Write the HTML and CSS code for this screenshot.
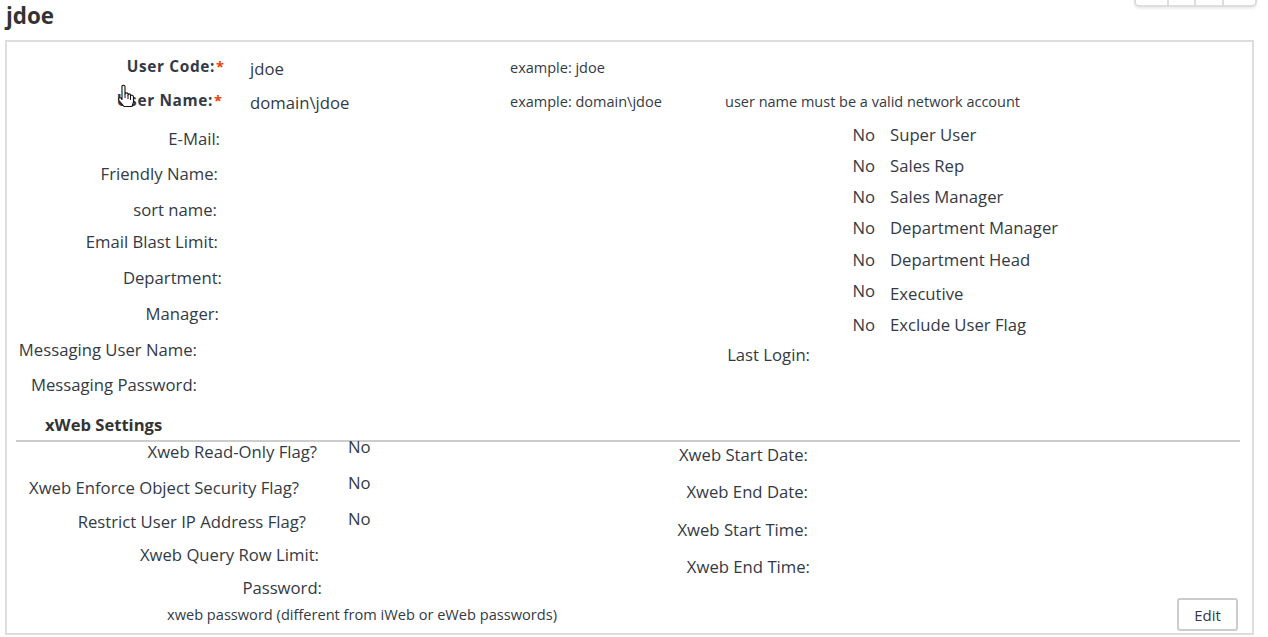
FILE: index.html
```html
<!DOCTYPE html>
<html lang="en">
<head>
<meta charset="utf-8">
<title>jdoe</title>
<link rel="stylesheet" href="styles.css">
</head>
<body>
<div class="toolbar"><span class="tool t1"></span><span class="tool t2"></span><span class="tool t3"></span><span class="tool t4"></span></div>
<h1 class="title">jdoe</h1>
<section class="panel">
  <div class="identity">
    <div class="id-row code">
      <span class="id-label"><b>User Code:</b><i>*</i></span>
      <span class="id-value">jdoe</span>
      <span class="hint">example: jdoe</span>
    </div>
    <div class="id-row name">
      <span class="id-label"><b>User Name:</b><i>*</i></span>
      <span class="id-value">domain\jdoe</span>
      <span class="hint">example: domain\jdoe</span>
      <span class="hint note">user name must be a valid network account</span>
    </div>
  </div>
  <div class="columns">
    <div class="fields">
      <div class="field h35 w204">E-Mail:</div>
      <div class="field h36 w202">Friendly Name:</div>
      <div class="field h32 w201">sort name:</div>
      <div class="field h36 w202b">Email Blast Limit:</div>
      <div class="field h36 w206">Department:</div>
      <div class="field h36 w203">Manager:</div>
      <div class="field h35 w181">Messaging User Name:</div>
      <div class="field h28 w181">Messaging Password:</div>
    </div>
    <div class="flags">
      <div class="flag h31"><span class="flag-no">No</span><span>Super User</span></div>
      <div class="flag h31"><span class="flag-no">No</span><span>Sales Rep</span></div>
      <div class="flag h31"><span class="flag-no">No</span><span>Sales Manager</span></div>
      <div class="flag h32"><span class="flag-no">No</span><span>Department Manager</span></div>
      <div class="flag h31"><span class="flag-no">No</span><span>Department Head</span></div>
      <div class="flag h34 exec"><span class="flag-no">No</span><span>Executive</span></div>
      <div class="flag h30"><span class="flag-no">No</span><span>Exclude User Flag</span></div>
      <div class="field last-login">Last Login:</div>
    </div>
  </div>
  <h2 class="section-title">xWeb Settings</h2>
  <div class="xweb">
    <div class="xweb-left">
      <div class="xrow h36"><span class="field w302">Xweb Read-Only Flag?</span><span class="xno no1">No</span></div>
      <div class="xrow h34"><span class="field w283">Xweb Enforce Object Security Flag?</span><span class="xno no2">No</span></div>
      <div class="xrow h33"><span class="field w290">Restrict User IP Address Flag?</span><span class="xno no3">No</span></div>
      <div class="xrow h33"><span class="field w303">Xweb Query Row Limit:</span></div>
      <div class="xrow h26"><span class="field w306">Password:</span></div>
      <div class="small-note">xweb password (different from iWeb or eWeb passwords)</div>
    </div>
    <div class="xweb-right">
      <div class="field h37 w792">Xweb Start Date:</div>
      <div class="field h38 w792">Xweb End Date:</div>
      <div class="field h37 w792">Xweb Start Time:</div>
      <div class="field h33 w794">Xweb End Time:</div>
      <button class="edit" type="button">Edit</button>
    </div>
  </div>
</section>
<svg class="cursor" width="19" height="25" viewBox="0 0 19 25"><path d="M5 2.500C5 .8 8 .8 8 2.500V10C8 8.500 11 8.500 11 10V11C11 9.500 13.500 9.500 13.500 11V12C13.500 10.500 16.500 11 16.500 13V18L15 22.500H7L2 16.500C1 15 2 13 4 14L5 15.500Z" fill="#fff" stroke="#111" stroke-width="1.100" stroke-linejoin="round"/><path d="M8 10v4M11 11v4M13.500 12v4" stroke="#111" stroke-width="1"/></svg>
</body>
</html>
```
FILE: styles.css
```css
* { box-sizing: border-box; }
html, body { margin: 0; height: 637px; overflow: hidden; }
body {
  position: relative;
  background: #fff;
  color: #333a45;
  font: 16.7px/22px "Open Sans", sans-serif;
}
.toolbar {
  position: absolute;
  top: -2px;
  left: 1134px;
  width: 123px;
  height: 9px;
  display: flex;
  border: 2px solid #ddd;
  border-radius: 0 0 5px 5px;
  box-shadow: 0 2px 2px #eee;
}
.tool { height: 100%; border-right: 2px solid #ddd; }
.t1 { width: 33px; }
.t2 { width: 27px; }
.t3 { width: 28px; }
.t4 { flex: 1; border-right: 0; }
.title {
  margin: 0;
  padding: 4px 0 0 6px;
  height: 40px;
  font-size: 22.4px;
  line-height: 24px;
  font-weight: 700;
  color: #333;
}
.panel {
  margin-left: 5px;
  padding: 1px 0 0 1px;
  width: 1249px;
  height: 595px;
  border: 2px solid #ddd;
}
.identity { padding-top: 14px; }
.id-row { display: flex; height: 34px; }
.id-label { width: 216px; text-align: right; font-size: 15.4px; letter-spacing: .65px; position: relative; top: -1px; }
.id-label b { font-weight: 700; }
.id-label i { color: #f03a0a; font-size: 14.5px; font-style: normal; font-weight: 700; margin-left: 1px; letter-spacing: 0; }
.name .id-label { width: 214px; margin-right: 2px; }
.id-value { margin-left: 26px; width: 260px; position: relative; top: 1px; }
.hint { font-size: 14.5px; width: 215px; }
.note { width: auto; }
.columns { display: flex; height: 289px; margin-top: -3px; }
.fields { width: 240px; padding-top: 6px; }
.flags { padding-top: 2px; flex: 1; }
.field { display: block; text-align: right; }
.flag { display: flex; padding-left: 595px; }
.flag-no { width: 32px; margin-right: 15px; text-align: right; }
.exec .flag-no { position: relative; top: -3px; }
.exec { padding-top: 3px; }
.last-login { width: 562px; }
.h26 { height: 26px; } .h28 { height: 28px; } .h30 { height: 30px; } .h31 { height: 31px; }
.h32 { height: 32px; } .h33 { height: 33px; } .h34 { height: 34px; } .h35 { height: 35px; }
.h36 { height: 36px; } .h37 { height: 37px; } .h38 { height: 38px; }
.w181 { width: 189px; } .w201 { width: 209px; } .w202 { width: 210px; } .w202b { width: 210px; }
.w203 { width: 211px; } .w204 { width: 212px; } .w206 { width: 214px; }
.w283 { width: 291px; } .w290 { width: 298px; } .w302 { width: 309px; }
.w303 { width: 311px; } .w306 { width: 314px; }
.w792 { width: 800px; } .w794 { width: 802px; }
.section-title {
  margin: 0 12px 0 8px;
  padding: 3px 0 0 29px;
  height: 31px;
  border-bottom: 2px solid #ccc;
  font-size: 16.6px;
  font-weight: 700;
  line-height: 22px;
  color: #333;
}
.xweb { display: flex; margin-top: -2px; }
.xweb-left { width: 600px; padding-top: 1px; }
.xweb-right { flex: 1; padding-top: 4px; margin-left: -600px; position: relative; pointer-events: none; }
.xrow { display: flex; }
.xno { margin-left: 31px; position: relative; top: -5px; }
.no2 { margin-left: 49px; }
.no3 { margin-left: 42px; top: -3px; }
.small-note { font-size: 14.6px; margin-top: -1px; padding-left: 159px; line-height: 24px; white-space: nowrap; }
.edit {
  position: absolute;
  right: 14px;
  top: 158px;
  width: 61px;
  height: 33px;
  padding: 0;
  background: #fff;
  border: 2px solid #ccc;
  border-radius: 3px;
  font: 15px "Open Sans", sans-serif;
  color: #333a45;
}
.cursor { position: absolute; left: 117px; top: 84px; }
```
